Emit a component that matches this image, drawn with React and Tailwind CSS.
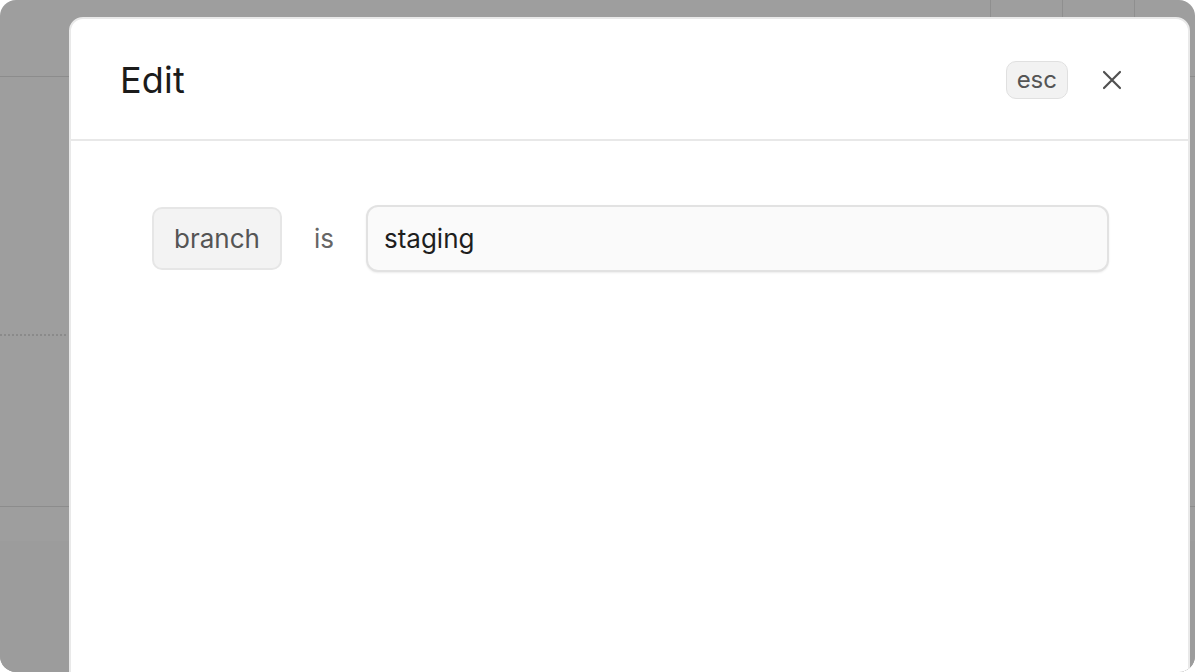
import React from 'react';

// backdrop app, dimmed behind the dialog
function Backdrop() {
  return (
    <div className="flex h-full w-full flex-col">
      <div className="flex h-[77px] border-b border-[#8c8c8c]">
        <div className="flex-1" />
        <div className="flex h-[18px]">
          <div className="w-[72px] border-l border-[#8f8f8f]" />
          <div className="w-[72px] border-l border-[#8f8f8f]" />
          <div className="w-[61px] border-l border-[#8f8f8f]" />
        </div>
      </div>
      <div className="h-[257px]" />
      <div className="w-[66px] border-t-2 border-dotted border-[#8a8a8a]" />
      <div className="h-[170px]" />
      <div className="border-t border-[#8c8c8c]" />
      <div className="h-[34px]" />
      <div className="flex-1 bg-[#9c9c9c]" />
    </div>
  );
}

function CloseIcon() {
  return (
    <svg width="20" height="20" viewBox="0 0 20 20" fill="none" stroke="#505050" strokeWidth="2.2" strokeLinecap="round">
      <path d="M2 2L18 18M18 2L2 18" />
    </svg>
  );
}

export default function App() {
  return (
    <div className="h-[672px] w-[1195px] overflow-hidden bg-white" style={{ fontFamily: 'Inter, "Noto Sans", sans-serif' }}>
      <div className="relative h-full w-full overflow-hidden rounded-[16px] bg-[#9e9e9e]">
        <Backdrop />

        {/* Dialog */}
        <div className="absolute left-[69px] top-[17px] h-[680px] w-[1121px] rounded-[14px] border-2 border-[#e9e9e9] bg-white">
          <div className="flex h-[122px] items-center justify-between border-b-2 border-[#e8e8e8] pl-[49px] pr-[66px] pt-[2px]">
            <h1 className="text-[36px] font-normal leading-none tracking-[0.2px] text-[#1b1b1b]">Edit</h1>
            <div className="flex items-center gap-[34px]">
              <span className="flex h-[38px] items-center rounded-[10px] border border-[#e0e0e0] bg-[#f2f2f2] px-[10px] text-[24px] text-[#555]">
                esc
              </span>
              <button className="flex h-[20px] w-[20px] items-center justify-center">
                <CloseIcon />
              </button>
            </div>
          </div>

          <div className="flex items-center pl-[81px] pr-[79px] pt-[64px]">
            <span className="flex h-[63px] items-center rounded-[10px] border-2 border-[#e6e6e6] bg-[#f3f3f3] px-[20px] text-[26px] text-[#555]">
              branch
            </span>
            <span className="ml-[32px] mr-[32px] text-[26px] text-[#666]">is</span>
            <div className="flex h-[67px] flex-1 items-center rounded-[12px] border-2 border-[#e2e2e2] bg-[#fafafa] px-[16px] text-[26px] text-[#1e1e1e] shadow-[0_1px_2px_rgba(0,0,0,0.08)]">
              staging
            </div>
          </div>
        </div>
      </div>
    </div>
  );
}
